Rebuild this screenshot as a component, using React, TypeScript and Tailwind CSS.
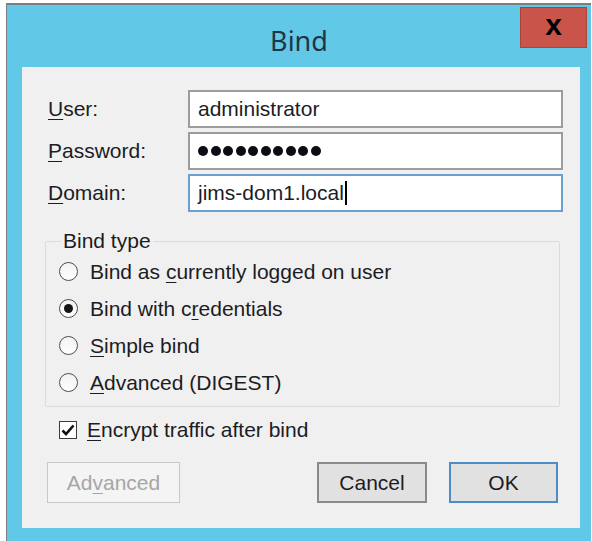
import React from 'react';

const ui = { fontFamily: '"Liberation Sans", Arial, sans-serif' };

// Accelerator key: underlined letter in a label
function Key({ children }: { children: React.ReactNode }) {
  return <span className="underline decoration-1 underline-offset-[3px]">{children}</span>;
}

function Field({ label, children }: { label: React.ReactNode; children: React.ReactNode }) {
  return (
    <>
      <div className="flex items-center h-[38px] text-[21px] text-[#1c1c24]">{label}</div>
      {children}
    </>
  );
}

function Radio({ checked, children }: { checked?: boolean; children: React.ReactNode }) {
  return (
    <div className="flex items-center h-[37px] pl-[13px] gap-[12px] text-[21px] text-[#1c1c24]">
      <span className="w-[19px] h-[19px] rounded-full border border-[#4d4d4d] bg-gradient-to-b from-[#f2f2f2] to-white flex items-center justify-center">
        {checked && <span className="w-[9px] h-[9px] rounded-full bg-[#141414]" />}
      </span>
      <span>{children}</span>
    </div>
  );
}

export default function App() {
  return (
    <div className="w-[592px] h-[541px] bg-white overflow-hidden" style={ui}>
      <div className="ml-[6px] mt-[3px] w-[585px] h-[538px] bg-[#62c8e8] border-t-2 border-l border-[#7a7f84] flex flex-col">
        {/* title bar */}
        <div className="relative h-[62px] flex justify-center pt-[20px]">
          <span className="text-[27px] leading-[32px] text-[#1f3546]" style={{ fontFamily: '"Noto Sans", "Open Sans", sans-serif' }}>
            Bind
          </span>
          <div className="absolute top-[2px] right-[4px] w-[67px] h-[41px] bg-[#c9554a] border border-[#a8443b] flex items-center justify-center">
            <span className="text-[30px] leading-none font-bold text-black -mt-[6px]">x</span>
          </div>
        </div>

        {/* client area */}
        <div className="ml-[15px] mr-[11px] h-[461px] bg-[#f0f0f0] flex flex-col">
          <div className="grid grid-cols-[140px_1fr] gap-y-[4px] pt-[23px] pl-[26px] pr-[17px]">
            <Field label={<span><Key>U</Key>ser:</span>}>
              <div className="h-[38px] border-2 border-[#9c9c9c] bg-white flex items-center pl-[8px] text-[21px] text-[#1c1c24]">
                administrator
              </div>
            </Field>
            <Field label={<span><Key>P</Key>assword:</span>}>
              <div className="h-[38px] border-2 border-[#9c9c9c] bg-white flex items-center pl-[8px] gap-[2.5px]">
                {Array.from({ length: 10 }).map((_, i) => (
                  <span key={i} className="w-[10px] h-[10px] rounded-full bg-[#0c0c14]" />
                ))}
              </div>
            </Field>
            <Field label={<span><Key>D</Key>omain:</span>}>
              <div className="h-[38px] border-2 border-[#6a9fcf] bg-white flex items-center pl-[8px] text-[21px] text-[#1c1c24]">
                jims-dom1.local
                <span className="w-[2px] h-[24px] bg-black ml-[1px]" />
              </div>
            </Field>
          </div>

          {/* bind type group */}
          <fieldset className="ml-[23px] mr-[20px] mt-[17px] border border-[#d6dde1] rounded-[2px] pb-[5px]">
            <legend className="ml-[15px] px-[2px] text-[21px] leading-[24px] text-[#1c1c24]">Bind type</legend>
            <Radio>Bind as <Key>c</Key>urrently logged on user</Radio>
            <Radio checked>Bind with c<Key>r</Key>edentials</Radio>
            <Radio><Key>S</Key>imple bind</Radio>
            <Radio><Key>A</Key>dvanced (DIGEST)</Radio>
          </fieldset>

          <div className="flex items-center h-[30px] mt-[8px] ml-[37px] gap-[10px] text-[21px] text-[#1c1c24]">
            <span className="w-[18px] h-[18px] border border-[#3a3a3a] bg-white flex items-center justify-center">
              <svg width="16" height="16" viewBox="0 0 16 16">
                <path d="M2.5 8.5 L6 12 L13.5 3.5" fill="none" stroke="#111" strokeWidth="2.6" />
              </svg>
            </span>
            <span><Key>E</Key>ncrypt traffic after bind</span>
          </div>

          {/* buttons */}
          <div className="flex items-center mt-[17px] pl-[25px] pr-[22px] text-[21px]">
            <div className="w-[133px] h-[41px] border border-[#c8c8c8] bg-[#f4f4f4] text-[#a6a6a6] flex items-center justify-center">
              <span>Ad<Key>v</Key>anced</span>
            </div>
            <div className="flex-1" />
            <div className="w-[110px] h-[41px] border-2 border-[#8a8a8a] bg-[#e1e1e1] text-[#1c1c24] flex items-center justify-center">
              Cancel
            </div>
            <div className="w-[109px] h-[41px] ml-[22px] border-2 border-[#4d8cc4] bg-[#e1e1e1] text-[#1c1c24] flex items-center justify-center">
              OK
            </div>
          </div>
        </div>
      </div>
    </div>
  );
}
